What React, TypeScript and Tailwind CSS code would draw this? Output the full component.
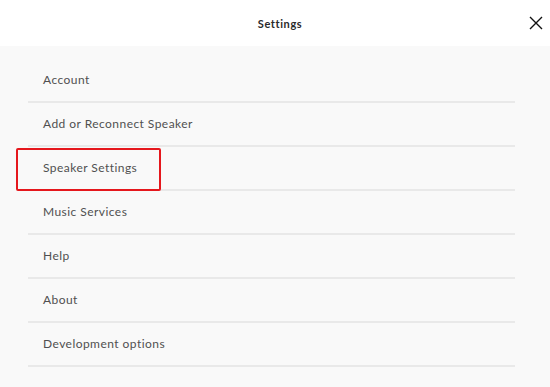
import React from "react";

const items = [
  "Account",
  "Add or Reconnect Speaker",
  "Speaker Settings",
  "Music Services",
  "Help",
  "About",
  "Development options",
];

export default function App() {
  return (
    <div className="w-[550px] h-[387px] overflow-hidden bg-[#f9f9f9] font-['Lato',sans-serif]">
      <header className="relative h-[46px] bg-white flex items-center justify-center pt-[3px] pl-[10px]">
        <span className="text-[11px] font-bold tracking-[0.6px] text-[#2a2a2a]">Settings</span>
        <button className="absolute right-[7px] top-[16px] w-[14px] h-[14px] text-[#111]" aria-label="Close">
          <svg viewBox="0 0 14 14" className="w-[14px] h-[14px]">
            <path d="M1 1L13 13M13 1L1 13" stroke="currentColor" strokeWidth="1.4" fill="none" />
          </svg>
        </button>
      </header>
      <ul className="ml-[28px] w-[487px] pt-[13px]">
        {items.map((label) => (
          <li
            key={label}
            className="relative h-[44px] flex items-center pl-[15px] border-b-2 border-[#e9e9e9] text-[12px] tracking-[0.45px] text-[#505050]"
          >
            {label}
            {label === "Speaker Settings" && (
              <span className="absolute left-[-12px] top-[1px] w-[145px] h-[43px] border-2 border-[#e5171d] rounded-[2px]" />
            )}
          </li>
        ))}
      </ul>
    </div>
  );
}
